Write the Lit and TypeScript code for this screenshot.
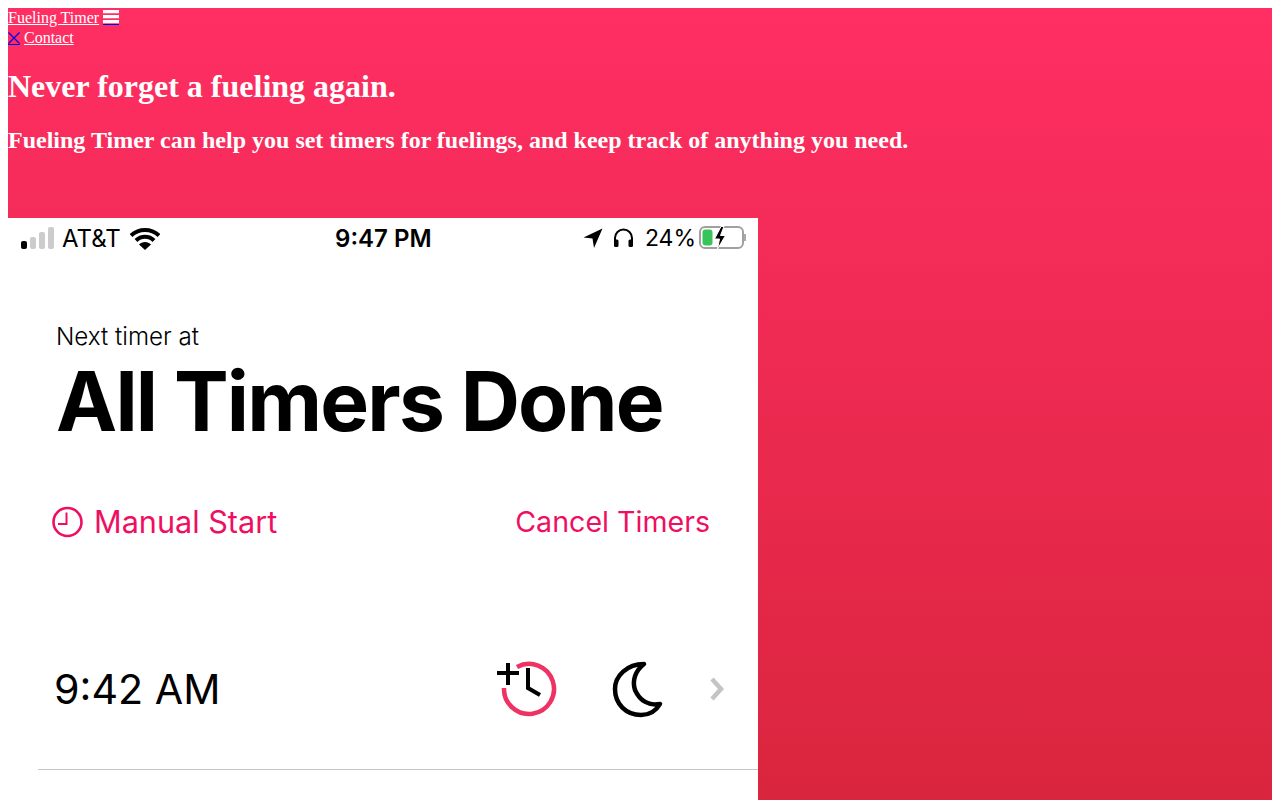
import { LitElement, html, css } from "lit";
import { customElement } from "lit/decorators.js";

@customElement("app-root")
export class AppRoot extends LitElement {
  static styles = css`
    :host { display: block; padding: 8px 8px 0; height: 792px; overflow: hidden; font-family: "Liberation Serif", serif; font-size: 16px; color: #fff; background: #fff; }
    .hero { height: 900px; background: linear-gradient(180deg, #ff2e63 0%, #d8253c 92%); }
    a { color: #fff; text-decoration: underline; }
    a.blue { color: #00e; text-decoration: none; }
    .line { display: block; height: 20px; line-height: 19px; white-space: nowrap; }
    .line2 { height: 18px; line-height: 19px; }
    .ham { display: inline-block; vertical-align: -2px; width: 16px; height: 14px; border-bottom: 1px solid #00e; }
    .xi { display: inline-block; vertical-align: -2px; width: 12px; height: 12px; border-bottom: 1px solid #00e; }
    h1 { margin: 22px 0 0; font-size: 32px; line-height: 37px; font-weight: 700; }
    h2 { margin: 22px 0 0; font-size: 24px; line-height: 27px; font-weight: 700; }
    .phone { margin-top: 64px; width: 750px; height: 600px; background: #fff; color: #000; font-family: Inter, sans-serif; box-sizing: border-box; }
    .status { height: 40px; padding: 0 11px 2px 13px; display: flex; align-items: center; justify-content: space-between; font-size: 24px; box-sizing: content-box; }
    .left, .right { display: flex; align-items: center; }
    .carrier { margin: 0 9px 0 7px; }
    .clock { font-weight: 600; position: relative; left: 12px; }
    .pct { margin: 0 3px 0 11px; font-size: 23px; }
    .main { padding: 62px 0 0 48px; }
    .next { font-size: 24.2px; line-height: 29px; font-weight: 300; }
    .big { font-size: 82px; font-weight: 700; line-height: 100px; letter-spacing: -1.8px; margin-top: 1px; }
    .actions { margin: 50px 48px 0 -4px; display: flex; align-items: center; justify-content: space-between; color: #ee0f62; line-height: 40px; }
    .ms { display: flex; align-items: center; gap: 11px; font-size: 30.6px; }
    .ct { font-size: 28.6px; }
    .row { margin: 0 0 0 -48px; padding: 118px 32px 0 46px; display: flex; align-items: center; }
    .time { font-size: 41.2px; line-height: 54px; flex: 1; }
    .icons { display: flex; align-items: center; }
    .moon { margin-left: 55px; }
    .chev { margin-left: 42px; }
    .rule { height: 1px; background: #c4c4c4; margin: 51px 0 0 -18px; }
    svg { display: block; }
    .headset { margin-left: 10px; }
  `;

  render() {
    return html`
      <div class="hero">
        <div class="line"><a href="#">Fueling Timer</a> <a href="#" class="blue"><svg class="ham" viewBox="0 0 16 14"><path d="M0 0h16v3.300H0zM0 5h16v3.300H0zM0 10h16v3.300H0z" fill="#fff"/></svg></a></div>
        <div class="line line2"><a href="#" class="blue"><svg class="xi" viewBox="0 0 12 12"><path d="M.5.5l11 11M11.500.5l-11 11" stroke="#00e" stroke-width="1.200" fill="none"/></svg></a> <a href="#">Contact</a></div>
        <h1>Never forget a fueling again.</h1>
        <h2>Fueling Timer can help you set timers for fuelings, and keep track of anything you need.</h2>
        <div class="phone">
          <div class="status">
            <div class="left">
              <svg width="34" height="22" viewBox="0 0 34 22"><rect x="0" y="14" width="6" height="8" rx="2" fill="#000"/><rect x="9" y="10" width="6" height="12" rx="2" fill="#ccc"/><rect x="18" y="5" width="6" height="17" rx="2" fill="#ccc"/><rect x="27" y="0" width="6" height="22" rx="2" fill="#ccc"/></svg>
              <span class="carrier">AT&amp;T</span>
              <svg width="30" height="23" viewBox="0 0 30 23"><path d="M1 8.500C9 1 21 1 29 8.500M6 13.500C11 8.500 19 8.500 24 13.500" stroke="#000" stroke-width="4" fill="none"/><path d="M9 17.500C12 14 18 14 21 17.500L15 23z" fill="#000"/></svg>
            </div>
            <div class="clock">9:47 PM</div>
            <div class="right">
              <svg width="20" height="20" viewBox="0 0 20 20"><path d="M19.500 0.500L0.500 9.500 9.500 10.500 11 20z" fill="#000"/></svg>
              <svg class="headset" width="21" height="20" viewBox="0 0 21 20"><path d="M2 14V10a8.500 8.500 0 0 1 17 0v4" stroke="#000" stroke-width="2" fill="none"/><rect x="1" y="11.500" width="4.500" height="7.500" rx="1.500" fill="#000"/><rect x="15.500" y="11.500" width="4.500" height="7.500" rx="1.500" fill="#000"/></svg>
              <span class="pct">24%</span>
              <svg width="48" height="24" viewBox="0 0 48 24"><rect x="1" y="1" width="43" height="21" rx="5" fill="none" stroke="#a0a0a0" stroke-width="2"/><rect x="3.500" y="3.500" width="10" height="16" rx="3" fill="#37c45a"/><path d="M46 8v7" stroke="#aaa" stroke-width="2"/><path d="M22 0.500L15.500 13h5l-2 10 8-13.500h-5L25 0.500z" fill="#000" stroke="#fff" stroke-width="1"/></svg>
            </div>
          </div>
          <div class="main">
            <div class="next">Next timer at</div>
            <div class="big">All Timers Done</div>
            <div class="actions">
              <div class="ms"><svg width="31" height="32" viewBox="0 0 31 32"><circle cx="15.500" cy="16" r="14" fill="none" stroke="#ee0f62" stroke-width="2.600"/><path d="M14.500 6.500v11.500H6" fill="none" stroke="#ee0f62" stroke-width="2"/></svg>Manual Start</div>
              <div class="ct">Cancel Timers</div>
            </div>
            <div class="row">
              <div class="time">9:42 AM</div>
              <div class="icons">
                <svg width="60" height="58" viewBox="0 0 60 58"><path d="M7 28A25 25 0 1 0 20 7" fill="none" stroke="#ee3264" stroke-width="4.500"/><path d="M31 8V28L43 35" fill="none" stroke="#000" stroke-width="4"/><path d="M0 13H22M11 3V25" stroke="#000" stroke-width="4" fill="none"/></svg>
                <svg class="moon" width="54" height="58" viewBox="0 0 54 58"><path d="M32 4C15 4 3 16 3 29c0 15 11 26 26 26 8 0 15-4 19-11-11 2-20-3-25-14-3-9 0-19 9-26z" fill="none" stroke="#000" stroke-width="4.500" stroke-linejoin="round"/></svg>
                <svg class="chev" width="18" height="28" viewBox="0 0 18 28"><path d="M4 4l9 10-9 10" fill="none" stroke="#c4c4c4" stroke-width="4.500"/></svg>
              </div>
            </div>
            <div class="rule"></div>
          </div>
        </div>
      </div>
    `;
  }
}
